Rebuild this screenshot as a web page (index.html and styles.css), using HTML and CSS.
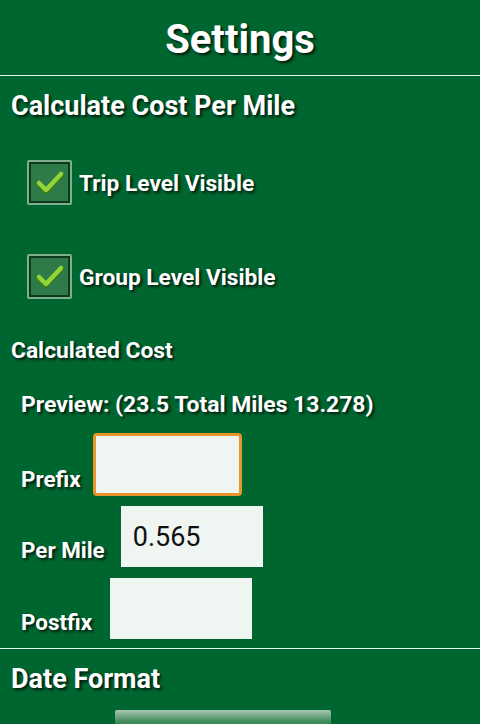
FILE: index.html
```html
<!DOCTYPE html>
<html lang="en">
<head>
  <meta charset="UTF-8" />
  <title>Settings</title>
  <link rel="stylesheet" href="styles.css">
</head>
<body>

  <h1 class="title">Settings</h1>

  <!-- Cost per mile section -->
  <section class="section">
    <h2 class="section-title">Calculate Cost Per Mile</h2>

    <label class="check-row">
      <span class="check-box">
        <svg width="32" height="28" viewBox="0 0 32 28">
          <path d="M5 15 L12 22 L27 6" fill="none" stroke="#3f7a12" stroke-width="6" stroke-linecap="round" stroke-linejoin="round"/>
          <path d="M5 14 L12 21 L27 5" fill="none" stroke="#8ed63a" stroke-width="4.5" stroke-linecap="round" stroke-linejoin="round"/>
        </svg>
      </span>
      <span class="check-text">Trip Level Visible</span>
    </label>

    <label class="check-row second">
      <span class="check-box">
        <svg width="32" height="28" viewBox="0 0 32 28">
          <path d="M5 15 L12 22 L27 6" fill="none" stroke="#3f7a12" stroke-width="6" stroke-linecap="round" stroke-linejoin="round"/>
          <path d="M5 14 L12 21 L27 5" fill="none" stroke="#8ed63a" stroke-width="4.5" stroke-linecap="round" stroke-linejoin="round"/>
        </svg>
      </span>
      <span class="check-text">Group Level Visible</span>
    </label>

    <h3 class="sub-title">Calculated Cost</h3>
    <p class="preview">Preview: (23.5 Total Miles 13.278)</p>

    <div class="field-row">
      <span class="field-label">Prefix</span>
      <input class="field field-focus prefix" type="text" value="" />
    </div>
    <div class="field-row">
      <span class="field-label">Per Mile</span>
      <input class="field permile" type="text" value="0.565" />
    </div>
    <div class="field-row">
      <span class="field-label">Postfix</span>
      <input class="field postfix" type="text" value="" />
    </div>
  </section>

  <!-- Date format section -->
  <section class="section">
    <h2 class="section-title date">Date Format</h2>
    <div class="date-button"></div>
  </section>

</body>
</html>
```

FILE: styles.css
```css
html, body {
  height: 100%;
}
body {
  margin: 0;
  background-color: #00662f;
  font-family: Roboto, "Liberation Sans", sans-serif;
  color: #ffffff;
  overflow: hidden;
}
.title, .section-title, .check-text, .sub-title, .preview, .field-label {
  font-weight: bold;
  text-shadow: 2px 2px 3px rgba(0, 0, 0, 0.75);
}
.title {
  margin: 0;
  height: 76px;
  box-sizing: border-box;
  padding-top: 17px;
  font-size: 40px;
  line-height: 46px;
  text-align: center;
  border-bottom: 1px solid #e8f5ec;
}
.section {
  padding: 0;
}
.section-title {
  margin: 0;
  padding: 14px 0 0 11px;
  font-size: 27px;
  line-height: 32px;
}
.check-row {
  display: flex;
  align-items: center;
  margin: 38px 0 0 27px;
}
.check-row.second {
  margin-top: 49px;
}
.check-box {
  width: 45px;
  height: 45px;
  box-sizing: border-box;
  border: 2px solid #7fb08e;
  box-shadow: inset 0 0 0 2px #0e3a1c;
  background-color: #2e7a48;
  border-radius: 2px;
  display: flex;
  align-items: center;
  justify-content: center;
}
.check-text {
  margin-left: 7px;
  padding-top: 3px;
  font-size: 22.7px;
  line-height: 28px;
}
.sub-title {
  margin: 38px 0 0 11px;
  font-size: 22.8px;
  line-height: 28px;
}
.preview {
  margin: 26px 0 0 21px;
  font-size: 22.9px;
  line-height: 28px;
}
.field-row {
  display: flex;
  align-items: flex-end;
  margin-left: 21px;
}
.field-row:nth-of-type(1) {
  margin-top: 14px;
}
.field-label {
  font-size: 22.4px;
  line-height: 28px;
  margin-bottom: 3px;
}
.field {
  box-sizing: border-box;
  height: 61px;
  width: 142px;
  border: none;
  background-color: #eff5f1;
  font-family: Roboto, "Liberation Sans", sans-serif;
  font-size: 27px;
  color: #111111;
  padding: 0 12px;
  outline: none;
}
.field-focus {
  height: 63px;
  width: 149px;
  border: 3px solid #e8962c;
  border-radius: 4px;
}
.prefix {
  margin-left: 12px;
}
.permile {
  margin-left: 16px;
  margin-top: 10px;
}
.postfix {
  margin-left: 18px;
  margin-top: 11px;
}
.section + .section {
  margin-top: 9px;
  border-top: 1px solid #e8f5ec;
}
.section-title.date {
  padding-top: 14px;
}
.date-button {
  margin: 15px 0 0 115px;
  width: 216px;
  height: 30px;
  background: linear-gradient(#a9c8b2, #3d8a57 40%, #2b7a45);
  border-radius: 2px;
}
```
